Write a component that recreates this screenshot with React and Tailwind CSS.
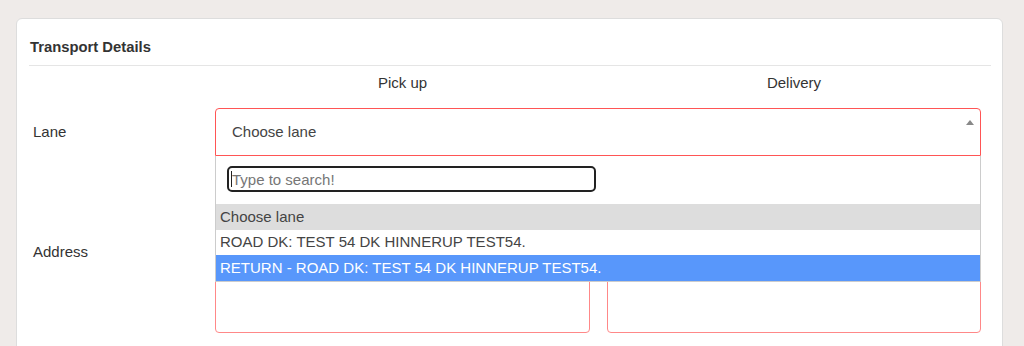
import React from 'react'

const options = [
  { label: 'Choose lane', state: 'muted' },
  { label: 'ROAD DK: TEST 54 DK HINNERUP TEST54.', state: 'plain' },
  { label: 'RETURN - ROAD DK: TEST 54 DK HINNERUP TEST54.', state: 'active' },
]

function LaneSelect() {
  return (
    <div className="relative col-span-2">
      <div className="relative flex h-[48px] items-center rounded-t-[4px] border border-[#f55] pl-[16px] text-[15px] text-[#444]">
        Choose lane
        <span className="absolute right-[6px] top-[11px] h-0 w-0 border-x-[4px] border-b-[5px] border-x-transparent border-b-[#888]"></span>
      </div>
      <div className="absolute left-0 right-0 top-full z-10 border-x border-b border-[#ccc] bg-white">
        <div className="px-[11px] pt-[10px] pb-[12px]">
          <div className="relative w-[369px]">
            <input
              type="text"
              placeholder="Type to search!"
              className="h-[26px] w-full rounded-[5px] border-2 border-[#222] pl-[3px] text-[15px] text-[#333] outline-none placeholder:text-[#767676]"
            />
            <span className="absolute left-[4px] top-[5px] h-[16px] w-px bg-[#222]"></span>
          </div>
        </div>
        <ul>
          {options.map((o) => (
            <li
              key={o.label}
              className={
                'flex h-[25.7px] items-center pl-[4px] text-[15px] ' +
                (o.state === 'muted'
                  ? 'bg-[#ddd] text-[#444]'
                  : o.state === 'active'
                  ? 'bg-[#5897fb] text-white'
                  : 'bg-white text-[#444]')
              }
            >
              {o.label}
            </li>
          ))}
        </ul>
      </div>
    </div>
  )
}

export default function App() {
  return (
    <div className="h-[346px] overflow-hidden bg-[#efebe9] pl-[16px] pt-[18px] font-['Liberation_Sans',Arial,sans-serif]">
      <div className="w-[987px] rounded-[6px] border border-[#ddd] bg-white pl-[12px] pr-[11px] pb-[40px]">
        <h2 className="pt-[19px] pb-[9px] pl-[1px] text-[14.8px] font-bold leading-[18px] text-[#333]">Transport Details</h2>
        <div className="border-t border-[#e5e5e5]"></div>
        <div className="grid grid-cols-[169px_375px_374px] gap-x-[17px] text-[15px] text-[#333]">
          <div></div>
          <div className="pt-[8px] text-center leading-[18px]">Pick up</div>
          <div className="pt-[8px] text-center leading-[18px]">Delivery</div>

          <div className="mt-[16px] flex h-[48px] items-center pl-[4px]">Lane</div>
          <div className="col-span-2 mt-[16px]">
            <div className="grid grid-cols-2 gap-x-[17px]">
              <LaneSelect />
            </div>
          </div>

          <div className="mt-[15px] flex h-[162px] items-center pl-[4px]">Address</div>
          <textarea className="mt-[15px] h-[162px] resize-none rounded-[4px] border border-[#f88] outline-none"></textarea>
          <textarea className="mt-[15px] h-[162px] resize-none rounded-[4px] border border-[#f88] outline-none"></textarea>
        </div>
      </div>
    </div>
  )
}
